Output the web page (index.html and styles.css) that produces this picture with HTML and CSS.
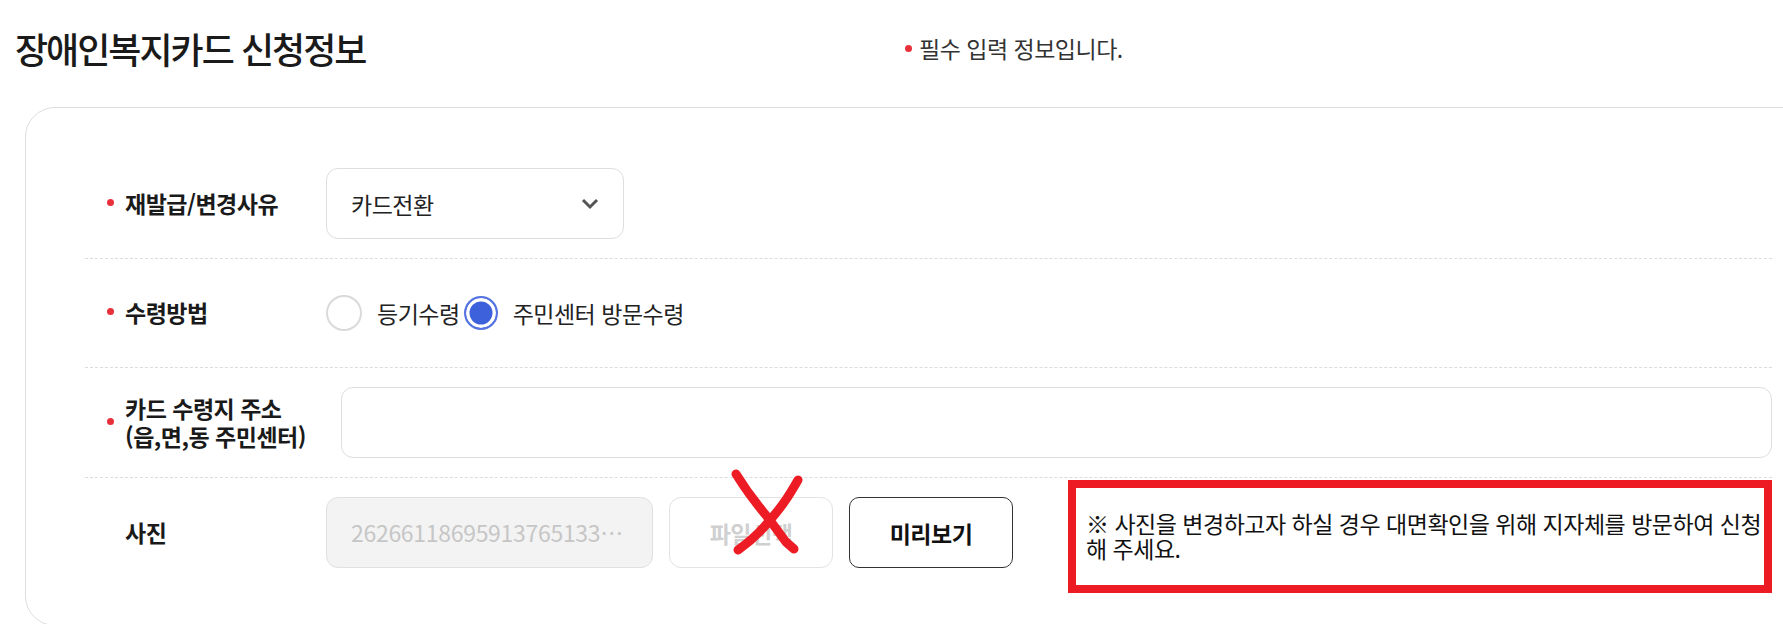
FILE: index.html
```html
<!DOCTYPE html>
<html lang="ko">
<head>
  <meta charset="UTF-8" />
  <meta name="viewport" content="width=device-width, initial-scale=1.0"/>
  <title>장애인복지카드 신청정보</title>
  <link rel="stylesheet" href="styles.css">
</head>
<body>
  <div class="page">
    <header class="page-head">
      <h2 class="page-title">장애인복지카드 신청정보</h2>
      <p class="required-note"><span class="dot"></span>필수 입력 정보입니다.</p>
    </header>

    <section class="card">
      <div class="row">
        <span class="label required">재발급/변경사유</span>
        <div class="select">
          <span>카드전환</span>
          <svg class="chevron" width="18" height="12" viewBox="0 0 18 12">
            <polyline points="2,2 9,9 16,2" fill="none" stroke="#555" stroke-width="3"/>
          </svg>
        </div>
      </div>

      <div class="row">
        <span class="label required">수령방법</span>
        <div class="radios">
          <label class="radio"><span class="radio-mark"></span>등기수령</label>
          <label class="radio checked"><span class="radio-mark"></span>주민센터 방문수령</label>
        </div>
      </div>

      <div class="row">
        <span class="label required label-wide">카드 수령지 주소<br>(읍,면,동 주민센터)</span>
        <input class="text-input" type="text" name="address" />
      </div>

      <div class="row row-last">
        <span class="label">사진</span>
        <div class="file-name">2626611869591376513345.jpg</div>
        <div class="file-btn-wrap">
          <button class="btn btn-disabled" type="button">파일선택</button>
          <!-- annotation: crossed out -->
          <svg class="strike-x" width="80" height="95" viewBox="0 0 80 95">
            <path d="M7 7 C11 13 14 18 19 25 C25 33 30 40 36 47 C44 57 51 67 57 75 L65 82" fill="none" stroke="#ed1c24" stroke-width="9" stroke-linecap="round" stroke-linejoin="round"/>
            <path d="M69 13 C65 20 61 27 56 34 C50 43 43 51 36 59 C28 68 19 76 9 83" fill="none" stroke="#ed1c24" stroke-width="9" stroke-linecap="round" stroke-linejoin="round"/>
          </svg>
        </div>
        <button class="btn btn-dark" type="button">미리보기</button>
        <p class="photo-guide">※ 사진을 변경하고자 하실 경우 대면확인을 위해 지자체를 방문하여 신청<br>해 주세요.</p>
      </div>
    </section>
  </div>
</body>
</html>
```

FILE: styles.css
```css
html,
body {
  margin: 0;
  padding: 0;
  overflow: hidden;
  background: #fff;
}

body {
  font-family: "Noto Sans CJK KR", "Noto Sans", sans-serif;
  color: #1a1a1a;
}

.page-head {
  display: grid;
  grid-template-columns: 890px 1fr;
  align-items: center;
  height: 96px;
  padding-left: 15px;
}

.page-title {
  margin: 0;
  font-size: 36px;
  font-weight: 500;
  letter-spacing: -2px;
  color: #1a1a1a;
}

.required-note {
  display: flex;
  align-items: center;
  gap: 7px;
  margin: 0;
  font-size: 23px;
  letter-spacing: -0.5px;
  color: #333;
}

.dot {
  width: 7px;
  height: 7px;
  border-radius: 50%;
  background: #e8303a;
}

.card {
  box-sizing: border-box;
  width: 1807px;
  margin: 11px 0 0 25px;
  padding: 41px 59px 38px;
  border: 1px solid #dedede;
  border-radius: 30px;
}

.row {
  display: flex;
  align-items: center;
  gap: 16px;
  min-height: 70px;
  padding: 19px 0 19px 20px;
  border-bottom: 1px dashed #dcdcdc;
}

.row-last {
  border-bottom: none;
}

.label {
  position: relative;
  box-sizing: border-box;
  min-width: 186px;
  margin-right: 19px;
  padding-left: 20px;
  font-size: 23px;
  font-weight: 700;
  line-height: 1.2;
  letter-spacing: -0.5px;
  color: #1a1a1a;
}

.label-wide {
  min-width: 199px;
}

.required::before {
  content: "";
  position: absolute;
  left: 2px;
  top: 50%;
  width: 7px;
  height: 7px;
  margin-top: -5px;
  border-radius: 50%;
  background: #e8303a;
}

.select {
  box-sizing: border-box;
  display: flex;
  align-items: center;
  justify-content: space-between;
  width: 298px;
  height: 71px;
  padding: 0 24px;
  border: 1px solid #dedede;
  border-radius: 12px;
  font-size: 23px;
  letter-spacing: -0.5px;
  color: #222;
}

.radios {
  display: flex;
  align-items: center;
  gap: 4px;
  height: 70px;
}

.radio {
  display: flex;
  align-items: center;
  gap: 15px;
  font-size: 23px;
  letter-spacing: -0.5px;
  color: #222;
}

.radio-mark {
  box-sizing: border-box;
  width: 36px;
  height: 36px;
  border: 2px solid #dadada;
  border-radius: 50%;
  background: #fff;
}

.radio.checked .radio-mark {
  width: 34px;
  height: 34px;
  border-color: #5574e2;
  background: #3d61da;
  box-shadow: inset 0 0 0 3.5px #fff;
}

.text-input {
  flex: 1;
  box-sizing: border-box;
  height: 71px;
  border: 1px solid #dedede;
  border-radius: 12px;
  font-size: 22px;
}

.file-name {
  box-sizing: border-box;
  width: 327px;
  height: 71px;
  padding: 0 24px;
  border: 1px solid #e0e0e0;
  border-radius: 12px;
  background: #f3f3f3;
  font-size: 23px;
  line-height: 69px;
  letter-spacing: -0.3px;
  color: #c6c6c6;
  white-space: nowrap;
  overflow: hidden;
  text-overflow: ellipsis;
}

.file-btn-wrap {
  position: relative;
}

.btn {
  box-sizing: border-box;
  width: 164px;
  height: 71px;
  border-radius: 12px;
  background: #fff;
  font-family: inherit;
  font-size: 23px;
  font-weight: 700;
  letter-spacing: -0.5px;
  cursor: pointer;
}

.btn-disabled {
  border: 1px solid #e3e3e3;
  color: #d0d0d0;
}

.btn-dark {
  border: 1px solid #333;
  border-radius: 10px;
  color: #111;
}

.strike-x {
  position: absolute;
  left: 60px;
  top: -30px;
}

.photo-guide {
  box-sizing: border-box;
  display: flex;
  align-items: center;
  width: 704px;
  height: 113px;
  margin: -18px 0 -25px auto;
  padding-left: 10px;
  border: 8px solid #ed1c24;
  font-size: 23px;
  line-height: 25px;
  letter-spacing: -0.5px;
  color: #111;
  white-space: nowrap;
}
```
